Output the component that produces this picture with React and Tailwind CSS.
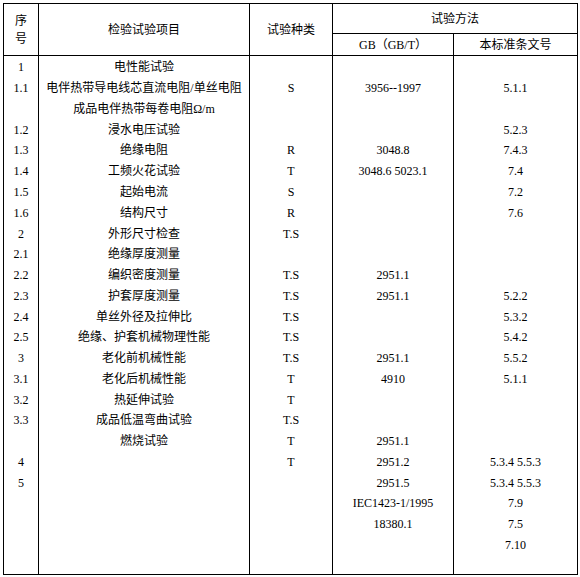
const rows = [
  ['1', '电性能试验', '', '', ''],
  ['1.1', '电伴热带导电线芯直流电阻/单丝电阻', 'S', '3956--1997', '5.1.1'],
  ['', '成品电伴热带每卷电阻Ω/m', '', '', ''],
  ['1.2', '浸水电压试验', '', '', '5.2.3'],
  ['1.3', '绝缘电阻', 'R', '3048.8', '7.4.3'],
  ['1.4', '工频火花试验', 'T', '3048.6 5023.1', '7.4'],
  ['1.5', '起始电流', 'S', '', '7.2'],
  ['1.6', '结构尺寸', 'R', '', '7.6'],
  ['2', '外形尺寸检查', 'T.S', '', ''],
  ['2.1', '绝缘厚度测量', '', '', ''],
  ['2.2', '编织密度测量', 'T.S', '2951.1', ''],
  ['2.3', '护套厚度测量', 'T.S', '2951.1', '5.2.2'],
  ['2.4', '单丝外径及拉伸比', 'T.S', '', '5.3.2'],
  ['2.5', '绝缘、护套机械物理性能', 'T.S', '', '5.4.2'],
  ['3', '老化前机械性能', 'T.S', '2951.1', '5.5.2'],
  ['3.1', '老化后机械性能', 'T', '4910', '5.1.1'],
  ['3.2', '热延伸试验', 'T', '', ''],
  ['3.3', '成品低温弯曲试验', 'T.S', '', ''],
  ['', '燃烧试验', 'T', '2951.1', ''],
  ['4', '', 'T', '2951.2', '5.3.4 5.5.3'],
  ['5', '', '', '2951.5', '5.3.4 5.5.3'],
  ['', '', '', 'IEC1423-1/1995', '7.9'],
  ['', '', '', '18380.1', '7.5'],
  ['', '', '', '', '7.10'],
]

const font = { fontFamily: '"Liberation Serif", "Noto Sans CJK SC", serif' }

function Column({ idx, first }) {
  return (
    <div className={`flex flex-col pt-[1px] ${first ? '' : 'border-l border-black'}`}>
      {rows.map((r, i) => (
        <div key={i} className="h-[20.78px] flex items-center justify-center whitespace-nowrap">
          {r[idx]}
        </div>
      ))}
    </div>
  )
}

export default function App() {
  return (
    <div className="bg-white w-[580px] h-[577px] pt-[3px] pl-[3px]">
      <div
        className="w-[575px] h-[572px] border border-black flex flex-col text-[12px] text-black leading-none"
        style={font}
      >
        <div className="grid grid-cols-[34px_211px_83px_121px_124px] grid-rows-[29px_22px]">
          <div className="row-span-2 flex flex-col items-center justify-center leading-[18px]">
            <span>序</span>
            <span>号</span>
          </div>
          <div className="row-span-2 border-l border-black flex items-center justify-center">检验试验项目</div>
          <div className="row-span-2 border-l border-black flex items-center justify-center">试验种类</div>
          <div className="col-span-2 border-l border-black flex items-center justify-center">试验方法</div>
          <div className="border-l border-t border-black flex items-center justify-center">GB（GB/T）</div>
          <div className="border-l border-t border-black flex items-center justify-center">本标准条文号</div>
        </div>
        <div className="flex-1 border-t border-black grid grid-cols-[34px_211px_83px_121px_124px]">
          <Column idx={0} first />
          <Column idx={1} />
          <Column idx={2} />
          <Column idx={3} />
          <Column idx={4} />
        </div>
      </div>
    </div>
  )
}
